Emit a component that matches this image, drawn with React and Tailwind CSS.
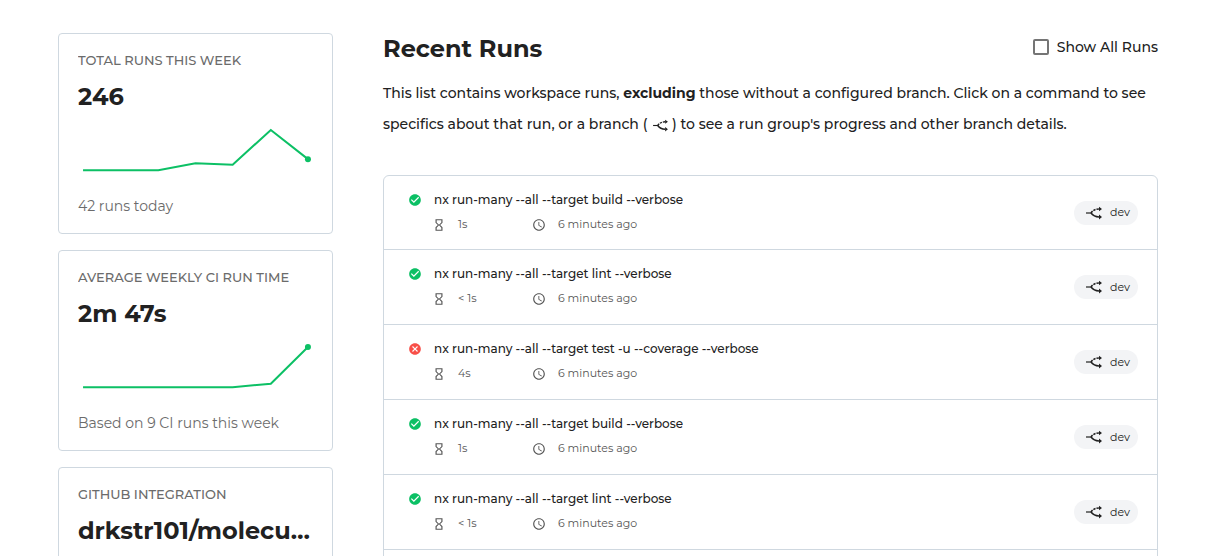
import { MdAccessTime, MdCancel, MdCheckCircle, MdHourglassEmpty } from "react-icons/md";

const runs = [
  { command: "nx run-many --all --target build --verbose", duration: "1s", ok: true },
  { command: "nx run-many --all --target lint --verbose", duration: "< 1s", ok: true },
  { command: "nx run-many --all --target test -u --coverage --verbose", duration: "4s", ok: false },
  { command: "nx run-many --all --target build --verbose", duration: "1s", ok: true },
  { command: "nx run-many --all --target lint --verbose", duration: "< 1s", ok: true },
];

function BranchIcon({ className }) {
  return (
    <svg viewBox="0 0 16 14" className={className} fill="none" stroke="currentColor" aria-hidden="true">
      <path d="M0 7H5.5" strokeWidth="1.2" />
      <path d="M5 7C6.8 4.6 8.6 3.2 13 3" strokeWidth="1.5" strokeDasharray="2.4 1" />
      <path d="M5 7C6.8 9.4 8.6 10.8 13 11" strokeWidth="1.6" />
      <path d="M13 0.8L16 3L13 5.2ZM13 8.6L16 11L13 13.4Z" fill="currentColor" stroke="none" />
    </svg>
  );
}

function Sparkline({ points }) {
  const [endX, endY] = points[points.length - 1];
  return (
    <svg viewBox="0 0 234 50" className="mt-3 block w-full text-[#0cc065]" aria-hidden="true">
      <polyline
        points={points.map((p) => p.join(",")).join(" ")}
        fill="none"
        stroke="currentColor"
        strokeWidth="2"
      />
      <circle cx={endX} cy={endY} r="3" fill="currentColor" />
    </svg>
  );
}

function StatCard({ label, value, points, note }) {
  return (
    <section className="h-[201px] shrink-0 rounded-[4px] border border-[#cfd8e0] px-[19px] pt-4">
      <h2 className="truncate text-[13px] leading-5 font-medium text-[#6b6b6b]">{label}</h2>
      <p className="mt-[11px] truncate text-[24px] leading-8 font-bold">{value}</p>
      {points && <Sparkline points={points} />}
      {note && <p className="mt-[21px] text-[14px] leading-5 text-[#6b6b6b]">{note}</p>}
    </section>
  );
}

function RunRow({ command, duration, ok }) {
  return (
    <li className="flex h-[75px] items-center border-b border-[#cfd8e0] pr-[19px] pl-6 first:h-[74px]">
      <div className="flex min-w-0 flex-1 gap-3 pb-0.5">
        {ok ? (
          <MdCheckCircle className="mt-[3px] size-[14px] shrink-0 text-[#0cc065]" />
        ) : (
          <MdCancel className="mt-[3px] size-[14px] shrink-0 text-[#f84f48]" />
        )}
        <div className="min-w-0">
          <a href="#run" className="block truncate text-[12px] leading-5 font-medium">
            {command}
          </a>
          <div className="mt-1 -ml-0.5 flex items-center text-[11px] leading-5 text-[#565656]">
            <span className="flex w-[100px] items-center gap-3">
              <MdHourglassEmpty className="mt-0.5 size-[14px]" />
              {duration}
            </span>
            <span className="flex items-center gap-3">
              <MdAccessTime className="mt-0.5 size-[14px]" />6 minutes ago
            </span>
          </div>
        </div>
      </div>
      <a href="#branch" className="flex h-6 items-center gap-2 rounded-full bg-[#f3f4f6] pr-2 pl-3 text-[11px]">
        <BranchIcon className="h-[14px] w-4" />
        dev
      </a>
    </li>
  );
}

export default function App() {
  return (
    <div className="flex h-screen gap-[50px] overflow-hidden bg-white pt-[33px] pr-[52px] pl-[58px] font-[Montserrat,Inter,sans-serif] text-[#212121]">
      <aside className="flex w-1/4 shrink-0 flex-col gap-4">
        <StatCard
          label="TOTAL RUNS THIS WEEK"
          value="246"
          points={[[5, 45], [80, 45], [117, 38], [154, 39.5], [192, 5], [229, 34]]}
          note="42 runs today"
        />
        <StatCard
          label="AVERAGE WEEKLY CI RUN TIME"
          value="2m 47s"
          points={[[5, 45], [154, 45], [192, 41.5], [229, 5]]}
          note="Based on 9 CI runs this week"
        />
        <StatCard label="GITHUB INTEGRATION" value="drkstr101/molecule" />
      </aside>
      <main className="min-w-0 flex-1">
        <header className="flex items-start justify-between">
          <h1 className="text-[24px] leading-8 font-bold">Recent Runs</h1>
          <label className="mt-1 flex items-center gap-2 text-[14px] leading-5 font-medium">
            <input
              type="checkbox"
              className="size-4 appearance-none rounded-[2px] border-2 border-[#757575] checked:bg-[#757575]"
            />
            Show All Runs
          </label>
        </header>
        <p className="mt-[13px] text-[14px] leading-[31px] font-medium">
          This list contains workspace runs, <strong>excluding</strong> those without a configured branch. Click on a
          command to see specifics about that run, or a branch ({" "}
          <BranchIcon className="ml-0.5 inline-block h-[13px] w-[15px]" />
          {" "}) to see a run group's progress and other branch details.
        </p>
        <ul className="mt-[35px] min-h-screen rounded-[6px] border border-[#cfd8e0]">
          {runs.map((run, i) => (
            <RunRow key={i} {...run} />
          ))}
        </ul>
      </main>
    </div>
  );
}
